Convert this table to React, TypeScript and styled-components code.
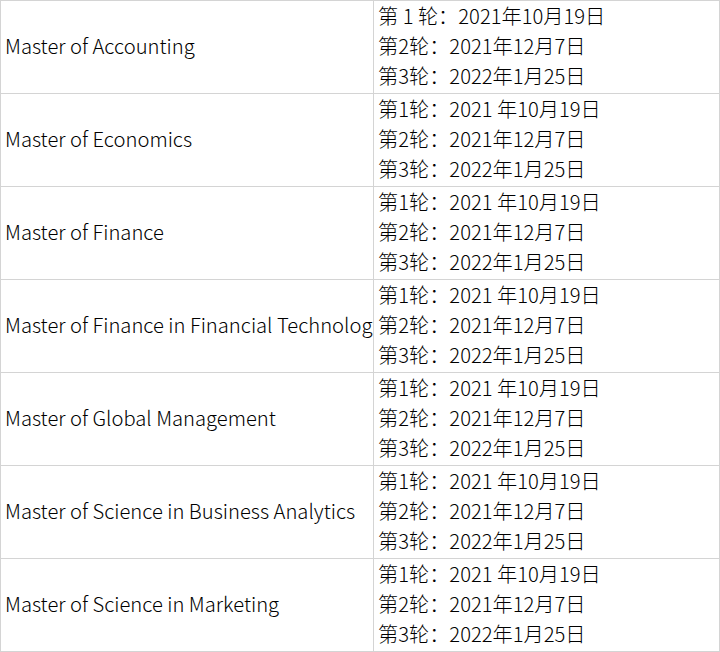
import React from "react";
import styled, { createGlobalStyle } from "styled-components";

const Global = createGlobalStyle`
  html, body { margin: 0; padding: 0; background: #fff; }
  body { font-family: "Noto Sans CJK SC", "Noto Sans", sans-serif; color: #000; }
`;

const Table = styled.table`
  border-collapse: collapse;
  table-layout: fixed;
  width: 720px;
  font-size: 20.2px;
  font-weight: 300;
  line-height: 30px;
`;

const Cell = styled.td<{ $w?: number }>`
  border: 1px solid #d4d4d4;
  padding: 0 4px 2px 4px;
  vertical-align: middle;
  white-space: nowrap;
  overflow: hidden;
  width: ${(p) => (p.$w ? `${p.$w}px` : "auto")};
`;

const Line = styled.div`
  white-space: nowrap;
`;

const programs = [
  "Master of Accounting",
  "Master of Economics",
  "Master of Finance",
  "Master of Finance in Financial Technology",
  "Master of Global Management",
  "Master of Science in Business Analytics",
  "Master of Science in Marketing",
];

export default function App() {
  return (
    <>
      <Global />
      <Table>
        <tbody>
          {programs.map((p, i) => (
            <tr key={p}>
              <Cell $w={364}>{p}</Cell>
              <Cell>
                <Line>{i === 0 ? "第 1 轮：2021年10月19日" : "第1轮：2021 年10月19日"}</Line>
                <Line>第2轮：2021年12月7日</Line>
                <Line>第3轮：2022年1月25日</Line>
              </Cell>
            </tr>
          ))}
        </tbody>
      </Table>
    </>
  );
}
